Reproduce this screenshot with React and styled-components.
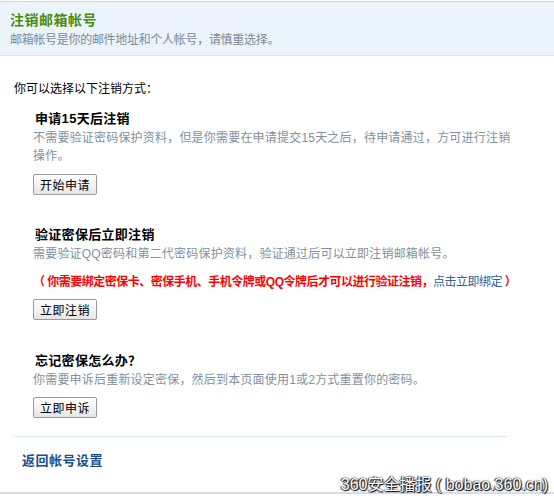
import React from "react";
import styled, { createGlobalStyle } from "styled-components";

const GlobalStyle = createGlobalStyle`
  html, body {
    margin: 0;
    padding: 0;
    background: #ffffff;
  }
  body {
    font-family: "Liberation Sans", "Noto Sans CJK SC", sans-serif;
    font-size: 12px;
    color: #000000;
  }
`;

const Page = styled.div`
  position: relative;
  width: 554px;
  height: 502px;
  padding-top: 1px;
  box-sizing: border-box;
  overflow: hidden;
`;

const Header = styled.div`
  border-top: 1px solid #c9d6e3;
  border-bottom: 1px solid #dde8f3;
  background: #ebf3fb;
  padding: 8px 10px 6px;
`;

const Title = styled.h1`
  margin: 0;
  font-size: 14px;
  line-height: 20px;
  font-weight: 700;
  color: #4c8d0c;
  letter-spacing: 0.5px;
`;

const Subtitle = styled.p`
  margin: 1px 0 0;
  font-size: 12px;
  line-height: 18px;
  color: #7d8a97;
  letter-spacing: -0.3px;
`;

const Body = styled.div`
  padding: 24px 0 0;
`;

const Intro = styled.p`
  margin: 0 0 0 14px;
  line-height: 18px;
`;

const Section = styled.div`
  width: 482px;
  margin: ${(p) => p.$gap}px 0 0 33px;
`;

const SectionTitle = styled.h2`
  margin: 0 0 0 2px;
  font-size: 13px;
  line-height: 20px;
  font-weight: 700;
  letter-spacing: 0.3px;
`;

const Desc = styled.p`
  margin: 0;
  line-height: 18px;
  color: #8290a0;
  letter-spacing: 0.2px;
`;

const Warn = styled.p`
  margin: 10px 0 0;
  line-height: 18px;
  color: #ff0000;
  font-weight: 700;
  white-space: nowrap;
  letter-spacing: -0.5px;
`;

const InlineLink = styled.a`
  color: #2d5e9e;
  font-weight: 400;
  text-decoration: none;
`;

const Button = styled.button`
  display: block;
  width: 64px;
  height: 21px;
  margin-top: ${(p) => p.$gap}px;
  padding: 0;
  border: 1px solid #9a9a9a;
  border-radius: 2px;
  background: linear-gradient(#ffffff, #e6e6e6);
  font-family: inherit;
  font-size: 12px;
  color: #000000;
  letter-spacing: 0.5px;
`;

const Divider = styled.hr`
  margin: 18px 0 0 14px;
  width: 493px;
  height: 0;
  border: none;
  border-top: 1px solid #dbe5ef;
`;

const BackLink = styled.a`
  display: block;
  margin: 14px 0 0 22px;
  font-size: 13px;
  line-height: 20px;
  font-weight: 700;
  color: #1b4d8f;
  text-decoration: none;
  letter-spacing: 0.5px;
`;

const BottomRule = styled.div`
  margin-top: 21px;
  height: 2px;
  background: #d3deea;
`;

const Watermark = styled.div`
  position: absolute;
  right: 6px;
  top: 474px;
  font-size: 16px;
  line-height: 22px;
  color: #ffffff;
  letter-spacing: 0;
  text-shadow: 1px 1px 1px #000, 0 0 2px #000, -1px 0 1px #333;
`;

export default function App() {
  return (
    <Page>
      <GlobalStyle />
      <Header>
        <Title>注销邮箱帐号</Title>
        <Subtitle>邮箱帐号是你的邮件地址和个人帐号，请慎重选择。</Subtitle>
      </Header>
      <Body>
        <Intro>你可以选择以下注销方式：</Intro>

        <Section $gap={11}>
          <SectionTitle>申请15天后注销</SectionTitle>
          <Desc>
            不需要验证密码保护资料，但是你需要在申请提交15天之后，待申请通过，方可进行注销操作。
          </Desc>
          <Button $gap={9}>开始申请</Button>
        </Section>

        <Section $gap={30}>
          <SectionTitle>验证密保后立即注销</SectionTitle>
          <Desc>需要验证QQ密码和第二代密码保护资料，验证通过后可以立即注销邮箱帐号。</Desc>
          <Warn>
            （ 你需要绑定密保卡、密保手机、手机令牌或QQ令牌后才可以进行验证注销，
            <InlineLink href="#">点击立即绑定</InlineLink> ）
          </Warn>
          <Button $gap={8}>立即注销</Button>
        </Section>

        <Section $gap={31}>
          <SectionTitle>忘记密保怎么办？</SectionTitle>
          <Desc>你需要申诉后重新设定密保，然后到本页面使用1或2方式重置你的密码。</Desc>
          <Button $gap={8}>立即申诉</Button>
        </Section>

        <Divider />
        <BackLink href="#">返回帐号设置</BackLink>
        <BottomRule />
      </Body>
      <Watermark>360安全播报 ( bobao.360.cn)</Watermark>
    </Page>
  );
}
